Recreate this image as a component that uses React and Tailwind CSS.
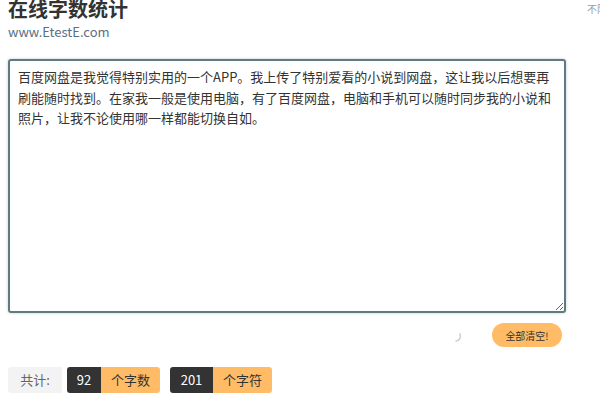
import React from "react";

const text =
  "百度网盘是我觉得特别实用的一个APP。我上传了特别爱看的小说到网盘，这让我以后想要再刷能随时找到。在家我一般是使用电脑，有了百度网盘，电脑和手机可以随时同步我的小说和照片，让我不论使用哪一样都能切换自如。";

export default function App() {
  return (
    <div
      className="relative w-[600px] h-[396px] overflow-hidden bg-white"
      style={{ fontFamily: '"Microsoft YaHei", "Noto Sans CJK SC", "Open Sans", sans-serif' }}
    >
      <div className="absolute right-[-7px] top-[1px] text-[10px] text-[#999]">不限</div>
      <div className="px-2">
        <h1 className="text-[20px] font-bold leading-[20px] text-[#333] mt-[-1px]">在线字数统计</h1>
        <div className="text-[13px] leading-[18px] text-[#5a6e82] mt-[4px]">www.EtestE.com</div>
        <textarea
          defaultValue={text}
          className="mt-[18px] block w-[558px] h-[254px] resize-y rounded-[3px] border-2 border-[#5f7a80] px-[8px] py-[6px] text-[13px] leading-[20.5px] text-[#333] outline-none shadow-[0_0_3px_rgba(95,122,128,0.4)]"
          style={{ fontFamily: '"Microsoft YaHei", "Noto Sans CJK SC", sans-serif' }}
        />
        <div className="mt-[10px] flex items-center justify-end pr-[30px]">
          <svg width="12" height="12" viewBox="0 0 12 12" className="mr-[30px] mt-[2px]">
            <path d="M6 11 A5 5 0 0 0 10 4" fill="none" stroke="#ccc" strokeWidth="1.5" strokeLinecap="round" />
          </svg>
          <button className="h-[24px] w-[70px] rounded-full bg-[#ffbb66] text-[10px] text-[#333]">全部清空!</button>
        </div>
        <div className="mt-[20px] flex items-center text-[13px]">
          <div className="h-[26px] w-[54px] rounded-l-[3px] bg-[#f3f3f3] flex items-center justify-center text-[#666]">共计:</div>
          <div className="ml-[5px] flex h-[26px] overflow-hidden rounded-[3px]">
            <div className="w-[34px] bg-[#333] text-white flex items-center justify-center">92</div>
            <div className="w-[59px] bg-[#ffbb66] text-[#333] flex items-center justify-center">个字数</div>
          </div>
          <div className="ml-[10px] flex h-[26px] overflow-hidden rounded-[3px]">
            <div className="w-[43px] bg-[#333] text-white flex items-center justify-center">201</div>
            <div className="w-[59px] bg-[#ffbb66] text-[#333] flex items-center justify-center">个字符</div>
          </div>
        </div>
      </div>
    </div>
  );
}
